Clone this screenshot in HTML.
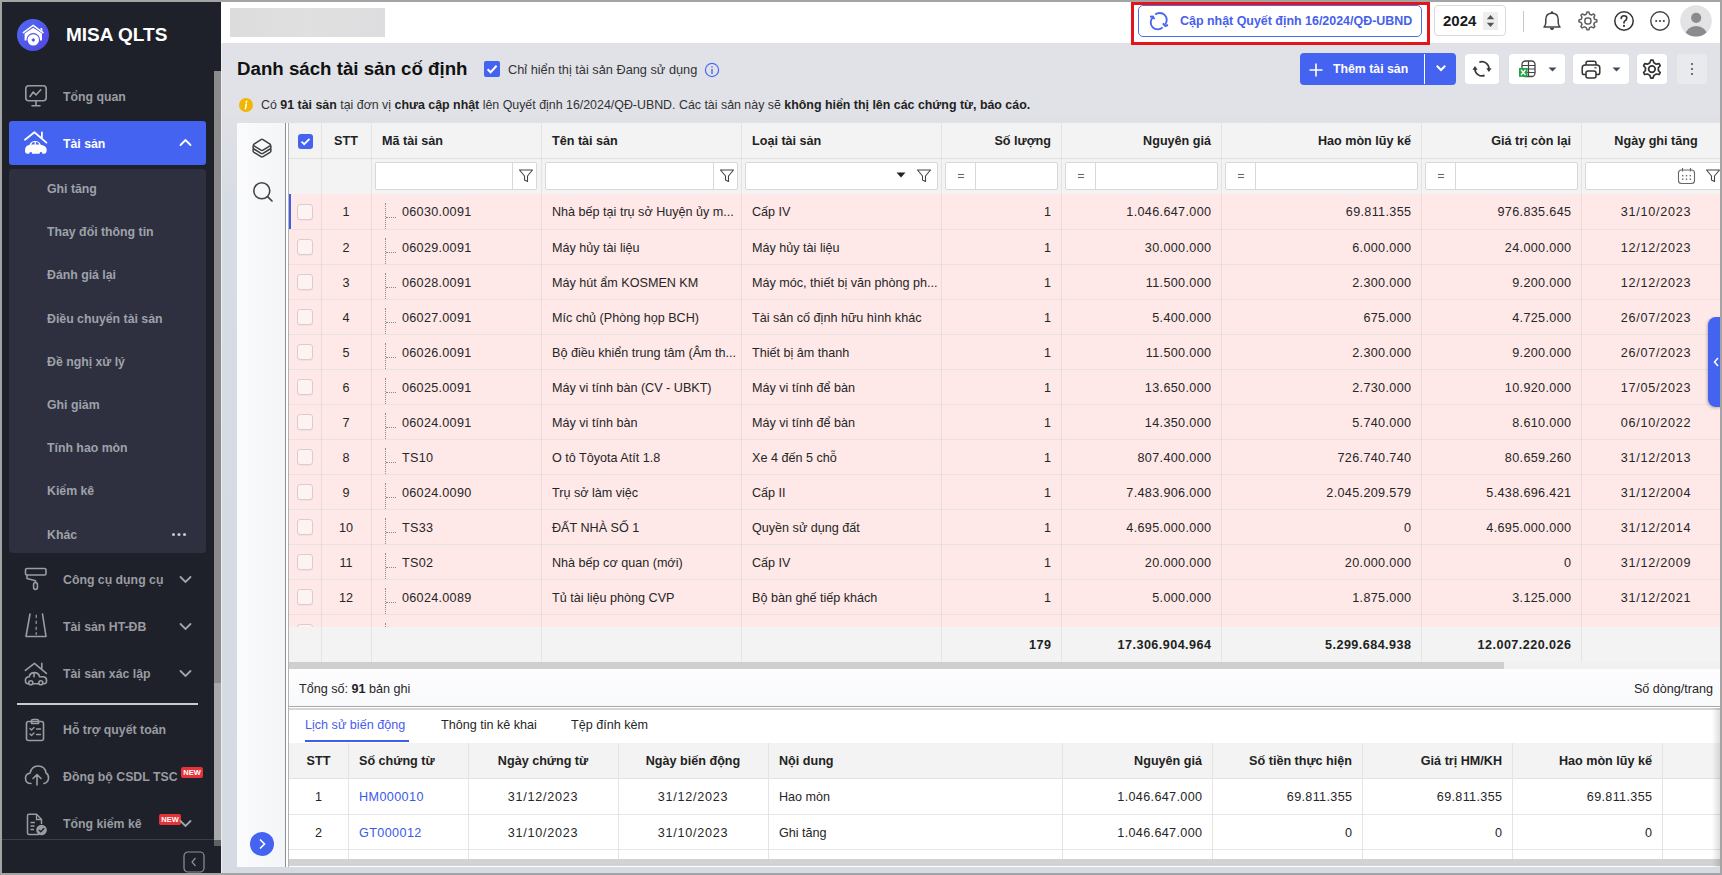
<!DOCTYPE html>
<html><head><meta charset="utf-8">
<style>
*{box-sizing:border-box;margin:0;padding:0}
html,body{width:1722px;height:875px;overflow:hidden;background:#a4a4a4;font-family:"Liberation Sans",sans-serif;color:#212121}
#frame{position:absolute;left:2px;top:2px;width:1718px;height:871px;overflow:hidden;background:#e0e2e7}
#pg{position:absolute;left:-2px;top:-2px;width:1722px;height:875px}
.a{position:absolute}
.nw{white-space:nowrap}
#side{position:absolute;left:0;top:0;width:221px;height:875px;background:#1e2129}
.mt{position:absolute;left:63px;color:#9a9ca2;font-weight:bold;font-size:12.3px;white-space:nowrap;line-height:16px}
.sub{position:absolute;left:47px;color:#9fa2a9;font-weight:bold;font-size:12.3px;white-space:nowrap;line-height:16px}
.ico{position:absolute;fill:none;stroke:#9b9da2;stroke-width:1.6;stroke-linecap:round;stroke-linejoin:round}
.new{position:absolute;background:#e5333a;color:#fff;font-size:7.5px;font-weight:bold;line-height:11px;height:11px;width:22px;text-align:center;border-radius:2px}
#top{position:absolute;left:221px;top:0;width:1501px;height:43px;background:#fff}
.rc{height:35px;line-height:37px;font-size:12.6px;color:#262626;white-space:nowrap}
.hc{height:35px;line-height:37px;font-size:12.6px;color:#222;font-weight:bold;white-space:nowrap}
</style></head>
<body>
<div id="frame"><div id="pg">
  <!-- SIDEBAR -->
  <div id="side">
    <!-- logo -->
    <svg class="a" style="left:17px;top:19px" width="32" height="32" viewBox="0 0 32 32">
      <defs><linearGradient id="lg" x1="0" y1="0" x2="1" y2="1"><stop offset="0" stop-color="#4d6cf0"/><stop offset="1" stop-color="#5544e4"/></linearGradient></defs>
      <circle cx="16" cy="16" r="16" fill="url(#lg)"/>
      <path d="M6.3 13.6 L16.2 6.3 L26 13.6" fill="none" stroke="#fff" stroke-width="1.5" stroke-linecap="round" stroke-linejoin="round"/>
      <path d="M23 9.8 L24.6 8.8 L25.4 10 L25.4 12.8 Z" fill="#fff"/>
      <path d="M7.6 14.6 L16.3 8.7 L25 14.6 V21.6 H7.6 Z" fill="#fff"/>
      <circle cx="16.3" cy="20.9" r="6.8" fill="#5057e8"/>
      <circle cx="16.3" cy="20.9" r="5.7" fill="#fff"/>
      <path d="M16.3 18.9 L18.3 20.9 L16.3 22.9 L14.3 20.9 Z" fill="#5057e8"/>
    </svg>
    <div class="a nw" style="left:66px;top:24px;color:#fff;font-weight:bold;font-size:19px;line-height:22px">MISA QLTS</div>

    <!-- Tong quan -->
    <svg class="ico" style="left:24px;top:84px" width="24" height="24" viewBox="0 0 24 24">
      <rect x="1.8" y="1.8" width="20.4" height="15" rx="3"/>
      <path d="M12 17 V21.5 M8 21.8 H16"/>
      <path d="M6 12.5 L9.3 8 L12 11 L16.8 5.8" />
    </svg>
    <div class="mt" style="top:89px">Tổng quan</div>

    <!-- active -->
    <div class="a" style="left:9px;top:121px;width:197px;height:44px;background:#4463f0;border-radius:3px"></div>
    <svg class="a" style="left:24px;top:131px" width="24" height="24" viewBox="0 0 24 24">
      <path d="M1 8.7 L10.4 1.3 L22.4 11.6 M17.9 1.3 V6.5" fill="none" stroke="#fff" stroke-width="1.8" stroke-linecap="round" stroke-linejoin="round"/>
      <path d="M5.6 13.8 Q6.6 9.9 11.2 9.9 Q15.6 9.9 16.8 13.8 Q22.7 14.6 22.7 19 Q22.7 22.7 20 22.7 H3.6 Q1 22.7 1 19.5 Q1 14.6 5.6 13.8 Z" fill="#fff"/>
      <path d="M7.2 13.4 Q8 11 10.6 11 V13.4 Z M11.9 11 Q14.4 11 15.3 13.4 H11.9 Z" fill="#4463f0"/>
      <circle cx="6.7" cy="22.2" r="1.3" fill="#4463f0"/><circle cx="17" cy="22.2" r="1.3" fill="#4463f0"/>
    </svg>
    <div class="a nw" style="left:63px;top:136px;color:#fff;font-weight:bold;font-size:12.3px;line-height:16px">Tài sản</div>
    <svg class="a" style="left:179px;top:138px" width="13" height="9" viewBox="0 0 13 9"><path d="M1.5 7 L6.5 2 L11.5 7" fill="none" stroke="#fff" stroke-width="1.8" stroke-linecap="round"/></svg>

    <!-- submenu -->
    <div class="a" style="left:9px;top:169px;width:197px;height:384px;background:#2e3040;border-radius:4px"></div>
    <div class="sub" style="top:181px">Ghi tăng</div>
    <div class="sub" style="top:224px">Thay đổi thông tin</div>
    <div class="sub" style="top:267px">Đánh giá lại</div>
    <div class="sub" style="top:311px">Điều chuyển tài sản</div>
    <div class="sub" style="top:354px">Đề nghị xử lý</div>
    <div class="sub" style="top:397px">Ghi giảm</div>
    <div class="sub" style="top:440px">Tính hao mòn</div>
    <div class="sub" style="top:483px">Kiểm kê</div>
    <div class="sub" style="top:527px">Khác</div>
    <div class="a" style="left:172px;top:533px;width:3px;height:3px;border-radius:50%;background:#c8cacd;box-shadow:5.5px 0 0 #c8cacd,11px 0 0 #c8cacd"></div>

    <!-- Cong cu dung cu -->
    <svg class="ico" style="left:24px;top:567px" width="24" height="24" viewBox="0 0 24 24">
      <rect x="1.5" y="1.5" width="20.5" height="6.5" rx="1.5"/>
      <path d="M3 8 V11.5 L11.5 13.8 V15.5"/>
      <rect x="9.6" y="15.5" width="3.8" height="7" rx="1.9"/>
    </svg>
    <div class="mt" style="top:572px">Công cụ dụng cụ</div>
    <svg class="a" style="left:179px;top:575px" width="13" height="9" viewBox="0 0 13 9"><path d="M1.5 2 L6.5 7 L11.5 2" fill="none" stroke="#a3a5ab" stroke-width="1.8" stroke-linecap="round"/></svg>

    <!-- HT-DB -->
    <svg class="ico" style="left:24px;top:612px" width="24" height="26" viewBox="0 0 24 26">
      <path d="M6 2 L2 24.5 H22 L18.5 2"/>
      <path d="M12.2 3 V5.5 M12.2 9 V11.5 M12.2 15 V17.5 M12.2 20.5 V22.5" stroke-width="1.2"/>
    </svg>
    <div class="mt" style="top:619px">Tài sản HT-ĐB</div>
    <svg class="a" style="left:179px;top:622px" width="13" height="9" viewBox="0 0 13 9"><path d="M1.5 2 L6.5 7 L11.5 2" fill="none" stroke="#a3a5ab" stroke-width="1.8" stroke-linecap="round"/></svg>

    <!-- xac lap -->
    <svg class="ico" style="left:24px;top:661px" width="24" height="25" viewBox="0 0 24 25">
      <path d="M1.4 9.4 L10.4 2.4 L22.4 12.4 M17.8 2.4 V7.4"/>
      <path d="M5.2 15.8 Q5.8 11.6 10.4 11.6 Q14.8 11.6 15.6 15.8 H19.5 Q22.6 16.2 22.6 19.5 Q22.6 22.8 20 22.8 H4 Q1.4 22.8 1.4 19.5 Q1.4 15.8 5.2 15.8 Z"/>
      <path d="M10 11.8 V15.8"/>
      <circle cx="6.8" cy="21.8" r="2" fill="#1e2129"/><circle cx="16.8" cy="21.8" r="2" fill="#1e2129"/>
    </svg>
    <div class="mt" style="top:666px">Tài sản xác lập</div>
    <svg class="a" style="left:179px;top:669px" width="13" height="9" viewBox="0 0 13 9"><path d="M1.5 2 L6.5 7 L11.5 2" fill="none" stroke="#a3a5ab" stroke-width="1.8" stroke-linecap="round"/></svg>

    <div class="a" style="left:17px;top:703px;width:181px;height:2px;background:#c9cbcf"></div>

    <!-- Ho tro quyet toan -->
    <svg class="ico" style="left:24px;top:718px" width="22" height="24" viewBox="0 0 22 24">
      <rect x="2.5" y="3.5" width="17" height="19" rx="2"/>
      <path d="M7.5 5.5 V2.8 Q7.5 1.5 9 1.5 H13 Q14.5 1.5 14.5 2.8 V5.5 Z"/>
      <path d="M6 10.5 L7.5 12 L10 9.5 M6 16 L7.5 17.5 L10 15 M12.5 11 H16.5 M12.5 16.5 H16.5" stroke-width="1.3"/>
    </svg>
    <div class="mt" style="top:722px">Hỗ trợ quyết toán</div>

    <!-- dong bo -->
    <svg class="ico" style="left:24px;top:764px" width="26" height="22" viewBox="0 0 26 22">
      <path d="M7 19.5 Q1.5 19.5 1.5 14.2 Q1.5 9.8 6 9.2 Q7.5 2 14 2 Q21 2 22 9 Q24.8 10.5 24.5 14.5 Q24 18.5 20 19.5"/>
      <path d="M13 21 V11 M9 14.5 L13 10.5 L17 14.5"/>
    </svg>
    <div class="mt" style="top:769px">Đồng bộ CSDL TSC</div>
    <div class="new" style="left:181px;top:767px">NEW</div>

    <!-- Tong kiem ke -->
    <svg class="a" style="left:26px;top:813px" width="22" height="23" viewBox="0 0 22 23">
      <path d="M13 21.5 H3 Q1.5 21.5 1.5 20 V2.8 Q1.5 1.3 3 1.3 H10.5 L15.5 6.5 V11" fill="none" stroke="#9b9da2" stroke-width="1.5" stroke-linejoin="round"/>
      <path d="M10.5 1.3 V6.5 H15.5" fill="none" stroke="#9b9da2" stroke-width="1.3"/>
      <path d="M4.5 13 H8.5 M4.5 16.5 H8 M4.5 9.5 H9" stroke="#9b9da2" stroke-width="1.3"/>
      <circle cx="15.5" cy="17" r="5.3" fill="#9b9da2"/>
      <path d="M12.9 17 L14.8 18.8 L18.2 15.3" fill="none" stroke="#1e2129" stroke-width="1.4"/>
    </svg>
    <div class="mt" style="top:816px">Tổng kiểm kê</div>
    <div class="new" style="left:159px;top:814px">NEW</div>
    <svg class="a" style="left:179px;top:819px" width="13" height="9" viewBox="0 0 13 9"><path d="M1.5 2 L6.5 7 L11.5 2" fill="none" stroke="#a3a5ab" stroke-width="1.8" stroke-linecap="round"/></svg>

    <div class="a" style="left:2px;top:839px;width:212px;height:1px;background:#3b3e46"></div>
    <svg class="a" style="left:183px;top:851px" width="22" height="22" viewBox="0 0 22 22">
      <rect x="1" y="1" width="20" height="20" rx="4" fill="none" stroke="#8f9196" stroke-width="1.2"/>
      <path d="M12.5 7 L9 11 L12.5 15" fill="none" stroke="#8f9196" stroke-width="1.2"/>
    </svg>
    <!-- scrollbar -->
    <div class="a" style="left:214px;top:71px;width:7px;height:770px;background:#a9a9a9"></div>
    <div class="a" style="left:214px;top:71px;width:7px;height:612px;background:#8b8b8b"></div>
    <div class="a" style="left:214px;top:840px;width:7px;height:6px;background:#5f6166"></div>
  </div>

  <div id="top">
  </div>
  <!-- blurred box -->
  <div class="a" style="left:230px;top:8px;width:155px;height:29px;background:linear-gradient(90deg,#dcdcdd,#e0e0e1 50%,#dddcde)"></div>
  <!-- red box -->
  <div class="a" style="left:1131px;top:2px;width:299px;height:43px;border:3px solid #e3151a"></div>
  <div class="a" style="left:1138px;top:5px;width:284px;height:32px;border:1.5px solid #4a6df0;border-radius:5px;background:#fff"></div>
  <svg class="a" style="left:1149px;top:11px" width="20" height="20" viewBox="0 0 20 20">
    <path d="M6.2 3.6 A7 7 0 0 1 16.2 13.3" fill="none" stroke="#4a66ee" stroke-width="1.9"/>
    <path d="M13.6 16.4 A7 7 0 0 1 3.8 6.4" fill="none" stroke="#4a66ee" stroke-width="1.9"/>
    <path d="M13.8 12.3 L16.3 15 L19 14" fill="none" stroke="#4a66ee" stroke-width="1.9" stroke-linejoin="round"/>
    <path d="M1 5.8 L4 5.4 L5.4 8.2" fill="none" stroke="#4a66ee" stroke-width="1.9" stroke-linejoin="round"/>
  </svg>
  <div class="a nw" style="left:1180px;top:13px;color:#4660ec;font-weight:bold;font-size:12.45px;line-height:16px">Cập nhật Quyết định 16/2024/QĐ-UBND</div>
  <!-- year -->
  <div class="a" style="left:1434px;top:5px;width:72px;height:31px;border:1px solid #d9d9d9;border-radius:4px;background:#fff"></div>
  <div class="a nw" style="left:1443px;top:12px;color:#1a1a1a;font-weight:bold;font-size:15px;line-height:17px">2024</div>
  <div class="a" style="left:1483px;top:12px;width:15px;height:18px;background:#eeeeee"></div>
  <svg class="a" style="left:1486px;top:14px" width="9" height="14" viewBox="0 0 9 14"><path d="M0.8 5.2 L4.5 1 L8.2 5.2 Z M0.8 8.8 L4.5 13 L8.2 8.8 Z" fill="#555"/></svg>
  <div class="a" style="left:1523px;top:11px;width:1px;height:21px;background:#c9c9c9"></div>
  <!-- bell -->
  <svg class="a" style="left:1541px;top:10px" width="22" height="22" viewBox="0 0 22 22">
    <path d="M3 17 Q4.8 15.2 4.8 12.5 V9.5 Q4.8 3.2 11 3.2 Q17.2 3.2 17.2 9.5 V12.5 Q17.2 15.2 19 17 Z" fill="none" stroke="#404040" stroke-width="1.5" stroke-linejoin="round"/>
    <path d="M10 2.9 Q11 1 12 2.9" fill="none" stroke="#404040" stroke-width="1.4"/>
    <path d="M9 18.4 Q11 20.8 13 18.4 Z" fill="#404040" stroke="#404040" stroke-width="1"/>
  </svg>
  <!-- gear -->
  <svg class="a" style="left:1576px;top:9px" width="24" height="24" viewBox="0 0 24 24">
    <path d="M10.18 5.22 L10.98 2.95 L12.82 2.95 L13.62 5.22 L15.41 5.96 L17.58 4.92 L18.88 6.22 L17.84 8.39 L18.58 10.18 L20.85 10.98 L20.85 12.82 L18.58 13.62 L17.84 15.41 L18.88 17.58 L17.58 18.88 L15.41 17.84 L13.62 18.58 L12.82 20.85 L10.98 20.85 L10.18 18.58 L8.39 17.84 L6.22 18.88 L4.92 17.58 L5.96 15.41 L5.22 13.62 L2.95 12.82 L2.95 10.98 L5.22 10.18 L5.96 8.39 L4.92 6.22 L6.22 4.92 L8.39 5.96 Z" fill="none" stroke="#5f5f5f" stroke-width="1.5" stroke-linejoin="round"/>
    <rect x="8.9" y="8.9" width="6" height="6" rx="2.4" fill="none" stroke="#5f5f5f" stroke-width="1.5"/>
  </svg>
  <!-- help -->
  <svg class="a" style="left:1613px;top:10px" width="22" height="22" viewBox="0 0 22 22">
    <circle cx="11" cy="11" r="9.2" fill="none" stroke="#333" stroke-width="1.5"/>
    <path d="M8.2 8.6 Q8.2 5.8 11 5.8 Q13.8 5.8 13.8 8.3 Q13.8 10 11.8 10.9 Q11 11.3 11 12.6 V13" fill="none" stroke="#333" stroke-width="1.6" stroke-linecap="round"/>
    <circle cx="11" cy="15.9" r="1.1" fill="#333"/>
  </svg>
  <!-- more -->
  <svg class="a" style="left:1649px;top:10px" width="22" height="22" viewBox="0 0 22 22">
    <circle cx="11" cy="11" r="9.2" fill="none" stroke="#444" stroke-width="1.4"/>
    <circle cx="7.2" cy="11" r="1.1" fill="#444"/><circle cx="11" cy="11" r="1.1" fill="#444"/><circle cx="14.8" cy="11" r="1.1" fill="#444"/>
  </svg>
  <!-- avatar -->
  <svg class="a" style="left:1680px;top:5px" width="32" height="32" viewBox="0 0 32 32">
    <defs><clipPath id="avc"><circle cx="16" cy="16" r="15.6"/></clipPath></defs>
    <circle cx="16" cy="16" r="15.8" fill="#e3e3e5"/>
    <g clip-path="url(#avc)" fill="#8a8a8f"><circle cx="16.2" cy="12.8" r="5.1"/><ellipse cx="16.2" cy="30" rx="10.8" ry="9"/></g>
  </svg>

  <!-- TITLE ROW -->
  <div class="a nw" style="left:237px;top:58px;color:#111;font-weight:bold;font-size:18.7px;line-height:22px">Danh sách tài sản cố định</div>
  <div class="a" style="left:484px;top:61px;width:16px;height:16px;background:#4463f0;border-radius:2px"></div>
  <svg class="a" style="left:484px;top:61px" width="16" height="16" viewBox="0 0 16 16"><path d="M3.6 8.2 L6.6 11.2 L12.6 4.8" fill="none" stroke="#fff" stroke-width="2"/></svg>
  <div class="a nw" style="left:508px;top:62px;color:#333;font-size:12.75px;line-height:16px">Chỉ hiển thị tài sản Đang sử dụng</div>
  <svg class="a" style="left:704px;top:62px" width="16" height="16" viewBox="0 0 16 16">
    <circle cx="8" cy="8" r="6.6" fill="none" stroke="#4a6cf0" stroke-width="1.2"/>
    <rect x="7.3" y="7" width="1.4" height="5" fill="#4a6cf0"/><circle cx="8" cy="5" r="0.85" fill="#4a6cf0"/>
  </svg>

  <!-- TOOLBAR -->
  <div class="a" style="left:1300px;top:53px;width:156px;height:32px;background:#4463f0;border-radius:4px"></div>
  <svg class="a" style="left:1308px;top:62px" width="16" height="16" viewBox="0 0 16 16"><path d="M8 1.5 V14.5 M1.5 8 H14.5" stroke="#fff" stroke-width="1.6"/></svg>
  <div class="a nw" style="left:1333px;top:61px;color:#fff;font-weight:bold;font-size:12.3px;line-height:16px">Thêm tài sản</div>
  <div class="a" style="left:1424px;top:54px;width:1px;height:30px;background:#fff"></div>
  <svg class="a" style="left:1435px;top:64px" width="12" height="8" viewBox="0 0 12 8"><path d="M1.8 1.8 L6 6 L10.2 1.8" fill="none" stroke="#fff" stroke-width="2"/></svg>

  <div class="a" style="left:1465px;top:54px;width:34px;height:30px;background:#fff;border-radius:4px"></div>
  <svg class="a" style="left:1472px;top:60px" width="21" height="18" viewBox="0 0 21 18">
    <path d="M7.3 2.3 A7 7 0 0 1 16.9 9.5" fill="none" stroke="#383838" stroke-width="1.7"/>
    <path d="M12.6 15.4 A7 7 0 0 1 3 8.5" fill="none" stroke="#383838" stroke-width="1.7"/>
    <path d="M14.3 8.2 L19.6 8.2 L16.9 12 Z" fill="#383838"/>
    <path d="M0.4 9.8 L5.7 9.8 L3 6 Z" fill="#383838"/>
  </svg>

  <div class="a" style="left:1509px;top:54px;width:56px;height:30px;background:#fff;border-radius:4px"></div>
  <svg class="a" style="left:1518px;top:60px" width="20" height="18" viewBox="0 0 20 18">
    <rect x="4" y="1" width="13" height="15.5" rx="3.5" fill="none" stroke="#444" stroke-width="1.3"/>
    <path d="M4 5.5 H17 M4 9 H17 M4 12.5 H17 M10.5 1 V16.5" stroke="#444" stroke-width="1.2"/>
    <rect x="1" y="8" width="8.5" height="8.8" fill="#21a443"/>
    <path d="M3 9.8 L7.5 15 M7.5 9.8 L3 15" stroke="#fff" stroke-width="1.3"/>
  </svg>
  <svg class="a" style="left:1548px;top:67px" width="9" height="5" viewBox="0 0 9 5"><path d="M0.5 0.5 H8.5 L4.5 4.5 Z" fill="#3d4a66"/></svg>

  <div class="a" style="left:1573px;top:54px;width:56px;height:30px;background:#fff;border-radius:4px"></div>
  <svg class="a" style="left:1581px;top:60px" width="20" height="19" viewBox="0 0 20 19">
    <path d="M5 5 V3.3 Q5 1.3 7 1.3 H13 Q15 1.3 15 3.3 V5" fill="none" stroke="#333" stroke-width="1.5"/>
    <path d="M5 14.5 H3.3 Q1.2 14.5 1.2 12.4 V8 Q1.2 5 4.2 5 H15.8 Q18.8 5 18.8 8 V12.4 Q18.8 14.5 16.7 14.5 H15" fill="none" stroke="#333" stroke-width="1.5"/>
    <rect x="5" y="11" width="10" height="7" rx="2" fill="none" stroke="#333" stroke-width="1.5"/>
    <path d="M13.5 7.8 H15.5" stroke="#333" stroke-width="1.2"/>
  </svg>
  <svg class="a" style="left:1612px;top:67px" width="9" height="5" viewBox="0 0 9 5"><path d="M0.5 0.5 H8.5 L4.5 4.5 Z" fill="#3d4a66"/></svg>

  <div class="a" style="left:1637px;top:54px;width:30px;height:30px;background:#fff;border-radius:4px"></div>
  <svg class="a" style="left:1640px;top:57px" width="24" height="24" viewBox="0 0 24 24">
    <path d="M9.86 5.82 L10.77 3.17 L13.03 3.17 L13.94 5.82 L16.32 7.20 L19.07 6.66 L20.20 8.61 L18.36 10.73 L18.36 13.47 L20.20 15.59 L19.07 17.54 L16.32 17.00 L13.94 18.38 L13.03 21.03 L10.77 21.03 L9.86 18.38 L7.48 17.00 L4.73 17.54 L3.60 15.59 L5.44 13.47 L5.44 10.73 L3.60 8.61 L4.73 6.66 L7.48 7.20 Z" fill="none" stroke="#333" stroke-width="1.7" stroke-linejoin="round"/>
    <circle cx="11.9" cy="12.1" r="3.3" fill="none" stroke="#333" stroke-width="1.7"/>
  </svg>

  <div class="a" style="left:1677px;top:54px;width:30px;height:30px;background:#e9eaed;border-radius:4px"></div>
  <div class="a" style="left:1691px;top:63px;width:2.4px;height:2.4px;background:#3d4a66;border-radius:1px;box-shadow:0 5px 0 #3d4a66,0 10px 0 #3d4a66"></div>

  <!-- NOTICE -->
  <svg class="a" style="left:239px;top:98px" width="14" height="14" viewBox="0 0 14 14">
    <circle cx="7" cy="7" r="7" fill="#f1b603"/>
    <path d="M7.6 3.2 L7.2 4.6" stroke="#fff" stroke-width="1.5" stroke-linecap="round"/>
    <path d="M7.3 6.2 L6.4 10.6" stroke="#fff" stroke-width="1.6" stroke-linecap="round"/>
  </svg>
  <div class="a nw" style="left:261px;top:97px;color:#333;font-size:12.4px;line-height:16px">Có <b style="color:#222">91 tài sản</b> tại đơn vị <b style="color:#222">chưa cập nhật</b> lên Quyết định 16/2024/QĐ-UBND. Các tài sản này sẽ <b style="color:#222">không hiển thị lên các chứng từ, báo cáo.</b></div>

  <!-- CONTENT PANEL -->
  <div class="a" style="left:221px;top:116px;width:1499px;height:759px;background:linear-gradient(#dfe1e6,#d7dbe3 84px,#d6dae3)"></div>
  <div class="a" style="left:221px;top:43px;width:1px;height:832px;background:#eceef2"></div>
  <div class="a" style="left:237px;top:123px;width:1483px;height:744px;background:#fff"></div>
  <div class="a" style="left:237px;top:123px;width:49px;height:744px;background:linear-gradient(90deg,#fbfbfc,#f3f5f8)"></div>
  <div class="a" style="left:285px;top:123px;width:1px;height:744px;background:#8e8e8e"></div>
  <div class="a" style="left:288px;top:123px;width:1px;height:744px;background:#b4b4b4"></div>
  <svg class="a" style="left:251px;top:137px" width="22" height="22" viewBox="0 0 22 22">
    <path d="M3 7.2 L10 2.6 Q11 2 12 2.6 L19 7.2 Q20 8 19 8.8 L12 13.2 Q11 13.8 10 13.2 L3 8.8 Q2 8 3 7.2 Z" fill="none" stroke="#3f3f3f" stroke-width="1.5"/>
    <path d="M2.1 8.4 V10.6 Q2.1 11.4 3 12 L10 16.4 Q11 17 12 16.4 L19 12 Q19.9 11.4 19.9 10.6 V8.4" fill="none" stroke="#3f3f3f" stroke-width="1.5"/>
    <path d="M2.1 11.6 V13.9 Q2.1 14.7 3 15.3 L10 19.7 Q11 20.3 12 19.7 L19 15.3 Q19.9 14.7 19.9 13.9 V11.6" fill="none" stroke="#3f3f3f" stroke-width="1.5"/>
  </svg>
  <svg class="a" style="left:252px;top:181px" width="22" height="22" viewBox="0 0 22 22">
    <circle cx="9.8" cy="9.8" r="8" fill="none" stroke="#444" stroke-width="1.6"/>
    <path d="M15.6 15.6 L20 20" stroke="#444" stroke-width="1.7" stroke-linecap="round"/>
  </svg>
  <svg class="a" style="left:250px;top:832px" width="24" height="24" viewBox="0 0 24 24">
    <circle cx="12" cy="12" r="12" fill="#4463f0"/>
    <path d="M10 7.5 L14.5 12 L10 16.5" fill="none" stroke="#fff" stroke-width="1.6"/>
  </svg>
<div class="a" style="left:289px;top:123px;width:1431px;height:546px;overflow:hidden;background:#fff">
<div class="a" style="left:0;top:0;width:1442px;height:71px;background:#f3f3f3"></div>
<div class="a" style="left:0;top:35px;width:1442px;height:1px;background:#e1e1e1"></div>
<div class="a" style="left:0;top:71px;width:1442px;height:35px;background:#fee8e8"></div>
<div class="a" style="left:8px;top:81px;width:16px;height:16px;border:1px solid #dccdcd;border-radius:3px;background:#fdf3f3;box-shadow:0 1px 1px rgba(0,0,0,0.04)"></div>
<div class="a rc" style="left:32px;top:71px;width:50px;text-align:center">1</div>
<div class="a" style="left:96px;top:80px;width:0;height:26px;border-left:1px dotted #8a8a8a"></div>
<div class="a" style="left:97px;top:94px;width:10px;height:0;border-top:1px dotted #8a8a8a"></div>
<div class="a rc" style="left:113px;top:71px;letter-spacing:0.3px">06030.0091</div>
<div class="a rc" style="left:263px;top:71px">Nhà bếp tại trụ sở Huyện ủy m...</div>
<div class="a rc" style="left:463px;top:71px">Cấp IV</div>
<div class="a rc" style="left:562.4px;top:71px;width:200px;text-align:right;letter-spacing:0.35px">1</div>
<div class="a rc" style="left:722.4px;top:71px;width:200px;text-align:right;letter-spacing:0.35px">1.046.647.000</div>
<div class="a rc" style="left:922.4px;top:71px;width:200px;text-align:right;letter-spacing:0.35px">69.811.355</div>
<div class="a rc" style="left:1082.4px;top:71px;width:200px;text-align:right;letter-spacing:0.35px">976.835.645</div>
<div class="a rc" style="left:1292px;top:71px;width:150px;text-align:center;letter-spacing:0.75px">31/10/2023</div>
<div class="a" style="left:0;top:106px;width:1442px;height:35px;background:#fee8e8"></div>
<div class="a" style="left:8px;top:116px;width:16px;height:16px;border:1px solid #dccdcd;border-radius:3px;background:#fdf3f3;box-shadow:0 1px 1px rgba(0,0,0,0.04)"></div>
<div class="a rc" style="left:32px;top:107px;width:50px;text-align:center">2</div>
<div class="a" style="left:96px;top:115px;width:0;height:26px;border-left:1px dotted #8a8a8a"></div>
<div class="a" style="left:97px;top:129px;width:10px;height:0;border-top:1px dotted #8a8a8a"></div>
<div class="a rc" style="left:113px;top:107px;letter-spacing:0.3px">06029.0091</div>
<div class="a rc" style="left:263px;top:107px">Máy hủy tài liệu</div>
<div class="a rc" style="left:463px;top:107px">Máy hủy tài liệu</div>
<div class="a rc" style="left:562.4px;top:107px;width:200px;text-align:right;letter-spacing:0.35px">1</div>
<div class="a rc" style="left:722.4px;top:107px;width:200px;text-align:right;letter-spacing:0.35px">30.000.000</div>
<div class="a rc" style="left:922.4px;top:107px;width:200px;text-align:right;letter-spacing:0.35px">6.000.000</div>
<div class="a rc" style="left:1082.4px;top:107px;width:200px;text-align:right;letter-spacing:0.35px">24.000.000</div>
<div class="a rc" style="left:1292px;top:107px;width:150px;text-align:center;letter-spacing:0.75px">12/12/2023</div>
<div class="a" style="left:0;top:141px;width:1442px;height:35px;background:#fee8e8"></div>
<div class="a" style="left:8px;top:151px;width:16px;height:16px;border:1px solid #dccdcd;border-radius:3px;background:#fdf3f3;box-shadow:0 1px 1px rgba(0,0,0,0.04)"></div>
<div class="a rc" style="left:32px;top:142px;width:50px;text-align:center">3</div>
<div class="a" style="left:96px;top:150px;width:0;height:26px;border-left:1px dotted #8a8a8a"></div>
<div class="a" style="left:97px;top:164px;width:10px;height:0;border-top:1px dotted #8a8a8a"></div>
<div class="a rc" style="left:113px;top:142px;letter-spacing:0.3px">06028.0091</div>
<div class="a rc" style="left:263px;top:142px">Máy hút ẩm KOSMEN KM</div>
<div class="a rc" style="left:463px;top:142px">Máy móc, thiết bị văn phòng ph...</div>
<div class="a rc" style="left:562.4px;top:142px;width:200px;text-align:right;letter-spacing:0.35px">1</div>
<div class="a rc" style="left:722.4px;top:142px;width:200px;text-align:right;letter-spacing:0.35px">11.500.000</div>
<div class="a rc" style="left:922.4px;top:142px;width:200px;text-align:right;letter-spacing:0.35px">2.300.000</div>
<div class="a rc" style="left:1082.4px;top:142px;width:200px;text-align:right;letter-spacing:0.35px">9.200.000</div>
<div class="a rc" style="left:1292px;top:142px;width:150px;text-align:center;letter-spacing:0.75px">12/12/2023</div>
<div class="a" style="left:0;top:176px;width:1442px;height:35px;background:#fee8e8"></div>
<div class="a" style="left:8px;top:186px;width:16px;height:16px;border:1px solid #dccdcd;border-radius:3px;background:#fdf3f3;box-shadow:0 1px 1px rgba(0,0,0,0.04)"></div>
<div class="a rc" style="left:32px;top:177px;width:50px;text-align:center">4</div>
<div class="a" style="left:96px;top:185px;width:0;height:26px;border-left:1px dotted #8a8a8a"></div>
<div class="a" style="left:97px;top:199px;width:10px;height:0;border-top:1px dotted #8a8a8a"></div>
<div class="a rc" style="left:113px;top:177px;letter-spacing:0.3px">06027.0091</div>
<div class="a rc" style="left:263px;top:177px">Míc chủ (Phòng họp BCH)</div>
<div class="a rc" style="left:463px;top:177px">Tài sản cố định hữu hình khác</div>
<div class="a rc" style="left:562.4px;top:177px;width:200px;text-align:right;letter-spacing:0.35px">1</div>
<div class="a rc" style="left:722.4px;top:177px;width:200px;text-align:right;letter-spacing:0.35px">5.400.000</div>
<div class="a rc" style="left:922.4px;top:177px;width:200px;text-align:right;letter-spacing:0.35px">675.000</div>
<div class="a rc" style="left:1082.4px;top:177px;width:200px;text-align:right;letter-spacing:0.35px">4.725.000</div>
<div class="a rc" style="left:1292px;top:177px;width:150px;text-align:center;letter-spacing:0.75px">26/07/2023</div>
<div class="a" style="left:0;top:211px;width:1442px;height:35px;background:#fee8e8"></div>
<div class="a" style="left:8px;top:221px;width:16px;height:16px;border:1px solid #dccdcd;border-radius:3px;background:#fdf3f3;box-shadow:0 1px 1px rgba(0,0,0,0.04)"></div>
<div class="a rc" style="left:32px;top:212px;width:50px;text-align:center">5</div>
<div class="a" style="left:96px;top:220px;width:0;height:26px;border-left:1px dotted #8a8a8a"></div>
<div class="a" style="left:97px;top:234px;width:10px;height:0;border-top:1px dotted #8a8a8a"></div>
<div class="a rc" style="left:113px;top:212px;letter-spacing:0.3px">06026.0091</div>
<div class="a rc" style="left:263px;top:212px">Bộ điều khiển trung tâm (Âm th...</div>
<div class="a rc" style="left:463px;top:212px">Thiết bị âm thanh</div>
<div class="a rc" style="left:562.4px;top:212px;width:200px;text-align:right;letter-spacing:0.35px">1</div>
<div class="a rc" style="left:722.4px;top:212px;width:200px;text-align:right;letter-spacing:0.35px">11.500.000</div>
<div class="a rc" style="left:922.4px;top:212px;width:200px;text-align:right;letter-spacing:0.35px">2.300.000</div>
<div class="a rc" style="left:1082.4px;top:212px;width:200px;text-align:right;letter-spacing:0.35px">9.200.000</div>
<div class="a rc" style="left:1292px;top:212px;width:150px;text-align:center;letter-spacing:0.75px">26/07/2023</div>
<div class="a" style="left:0;top:246px;width:1442px;height:35px;background:#fee8e8"></div>
<div class="a" style="left:8px;top:256px;width:16px;height:16px;border:1px solid #dccdcd;border-radius:3px;background:#fdf3f3;box-shadow:0 1px 1px rgba(0,0,0,0.04)"></div>
<div class="a rc" style="left:32px;top:247px;width:50px;text-align:center">6</div>
<div class="a" style="left:96px;top:255px;width:0;height:26px;border-left:1px dotted #8a8a8a"></div>
<div class="a" style="left:97px;top:269px;width:10px;height:0;border-top:1px dotted #8a8a8a"></div>
<div class="a rc" style="left:113px;top:247px;letter-spacing:0.3px">06025.0091</div>
<div class="a rc" style="left:263px;top:247px">Máy vi tính bàn (CV - UBKT)</div>
<div class="a rc" style="left:463px;top:247px">Máy vi tính để bàn</div>
<div class="a rc" style="left:562.4px;top:247px;width:200px;text-align:right;letter-spacing:0.35px">1</div>
<div class="a rc" style="left:722.4px;top:247px;width:200px;text-align:right;letter-spacing:0.35px">13.650.000</div>
<div class="a rc" style="left:922.4px;top:247px;width:200px;text-align:right;letter-spacing:0.35px">2.730.000</div>
<div class="a rc" style="left:1082.4px;top:247px;width:200px;text-align:right;letter-spacing:0.35px">10.920.000</div>
<div class="a rc" style="left:1292px;top:247px;width:150px;text-align:center;letter-spacing:0.75px">17/05/2023</div>
<div class="a" style="left:0;top:281px;width:1442px;height:35px;background:#fee8e8"></div>
<div class="a" style="left:8px;top:291px;width:16px;height:16px;border:1px solid #dccdcd;border-radius:3px;background:#fdf3f3;box-shadow:0 1px 1px rgba(0,0,0,0.04)"></div>
<div class="a rc" style="left:32px;top:282px;width:50px;text-align:center">7</div>
<div class="a" style="left:96px;top:290px;width:0;height:26px;border-left:1px dotted #8a8a8a"></div>
<div class="a" style="left:97px;top:304px;width:10px;height:0;border-top:1px dotted #8a8a8a"></div>
<div class="a rc" style="left:113px;top:282px;letter-spacing:0.3px">06024.0091</div>
<div class="a rc" style="left:263px;top:282px">Máy vi tính bàn</div>
<div class="a rc" style="left:463px;top:282px">Máy vi tính để bàn</div>
<div class="a rc" style="left:562.4px;top:282px;width:200px;text-align:right;letter-spacing:0.35px">1</div>
<div class="a rc" style="left:722.4px;top:282px;width:200px;text-align:right;letter-spacing:0.35px">14.350.000</div>
<div class="a rc" style="left:922.4px;top:282px;width:200px;text-align:right;letter-spacing:0.35px">5.740.000</div>
<div class="a rc" style="left:1082.4px;top:282px;width:200px;text-align:right;letter-spacing:0.35px">8.610.000</div>
<div class="a rc" style="left:1292px;top:282px;width:150px;text-align:center;letter-spacing:0.75px">06/10/2022</div>
<div class="a" style="left:0;top:316px;width:1442px;height:35px;background:#fee8e8"></div>
<div class="a" style="left:8px;top:326px;width:16px;height:16px;border:1px solid #dccdcd;border-radius:3px;background:#fdf3f3;box-shadow:0 1px 1px rgba(0,0,0,0.04)"></div>
<div class="a rc" style="left:32px;top:317px;width:50px;text-align:center">8</div>
<div class="a" style="left:96px;top:325px;width:0;height:26px;border-left:1px dotted #8a8a8a"></div>
<div class="a" style="left:97px;top:339px;width:10px;height:0;border-top:1px dotted #8a8a8a"></div>
<div class="a rc" style="left:113px;top:317px;letter-spacing:0.3px">TS10</div>
<div class="a rc" style="left:263px;top:317px">O tô Tôyota Atít 1.8</div>
<div class="a rc" style="left:463px;top:317px">Xe 4 đến 5 chỗ</div>
<div class="a rc" style="left:562.4px;top:317px;width:200px;text-align:right;letter-spacing:0.35px">1</div>
<div class="a rc" style="left:722.4px;top:317px;width:200px;text-align:right;letter-spacing:0.35px">807.400.000</div>
<div class="a rc" style="left:922.4px;top:317px;width:200px;text-align:right;letter-spacing:0.35px">726.740.740</div>
<div class="a rc" style="left:1082.4px;top:317px;width:200px;text-align:right;letter-spacing:0.35px">80.659.260</div>
<div class="a rc" style="left:1292px;top:317px;width:150px;text-align:center;letter-spacing:0.75px">31/12/2013</div>
<div class="a" style="left:0;top:351px;width:1442px;height:35px;background:#fee8e8"></div>
<div class="a" style="left:8px;top:361px;width:16px;height:16px;border:1px solid #dccdcd;border-radius:3px;background:#fdf3f3;box-shadow:0 1px 1px rgba(0,0,0,0.04)"></div>
<div class="a rc" style="left:32px;top:352px;width:50px;text-align:center">9</div>
<div class="a" style="left:96px;top:360px;width:0;height:26px;border-left:1px dotted #8a8a8a"></div>
<div class="a" style="left:97px;top:374px;width:10px;height:0;border-top:1px dotted #8a8a8a"></div>
<div class="a rc" style="left:113px;top:352px;letter-spacing:0.3px">06024.0090</div>
<div class="a rc" style="left:263px;top:352px">Trụ sở làm việc</div>
<div class="a rc" style="left:463px;top:352px">Cấp II</div>
<div class="a rc" style="left:562.4px;top:352px;width:200px;text-align:right;letter-spacing:0.35px">1</div>
<div class="a rc" style="left:722.4px;top:352px;width:200px;text-align:right;letter-spacing:0.35px">7.483.906.000</div>
<div class="a rc" style="left:922.4px;top:352px;width:200px;text-align:right;letter-spacing:0.35px">2.045.209.579</div>
<div class="a rc" style="left:1082.4px;top:352px;width:200px;text-align:right;letter-spacing:0.35px">5.438.696.421</div>
<div class="a rc" style="left:1292px;top:352px;width:150px;text-align:center;letter-spacing:0.75px">31/12/2004</div>
<div class="a" style="left:0;top:386px;width:1442px;height:35px;background:#fee8e8"></div>
<div class="a" style="left:8px;top:396px;width:16px;height:16px;border:1px solid #dccdcd;border-radius:3px;background:#fdf3f3;box-shadow:0 1px 1px rgba(0,0,0,0.04)"></div>
<div class="a rc" style="left:32px;top:387px;width:50px;text-align:center">10</div>
<div class="a" style="left:96px;top:395px;width:0;height:26px;border-left:1px dotted #8a8a8a"></div>
<div class="a" style="left:97px;top:409px;width:10px;height:0;border-top:1px dotted #8a8a8a"></div>
<div class="a rc" style="left:113px;top:387px;letter-spacing:0.3px">TS33</div>
<div class="a rc" style="left:263px;top:387px">ĐẤT NHÀ SỐ 1</div>
<div class="a rc" style="left:463px;top:387px">Quyền sử dụng đất</div>
<div class="a rc" style="left:562.4px;top:387px;width:200px;text-align:right;letter-spacing:0.35px">1</div>
<div class="a rc" style="left:722.4px;top:387px;width:200px;text-align:right;letter-spacing:0.35px">4.695.000.000</div>
<div class="a rc" style="left:922.4px;top:387px;width:200px;text-align:right;letter-spacing:0.35px">0</div>
<div class="a rc" style="left:1082.4px;top:387px;width:200px;text-align:right;letter-spacing:0.35px">4.695.000.000</div>
<div class="a rc" style="left:1292px;top:387px;width:150px;text-align:center;letter-spacing:0.75px">31/12/2014</div>
<div class="a" style="left:0;top:421px;width:1442px;height:35px;background:#fee8e8"></div>
<div class="a" style="left:8px;top:431px;width:16px;height:16px;border:1px solid #dccdcd;border-radius:3px;background:#fdf3f3;box-shadow:0 1px 1px rgba(0,0,0,0.04)"></div>
<div class="a rc" style="left:32px;top:422px;width:50px;text-align:center">11</div>
<div class="a" style="left:96px;top:430px;width:0;height:26px;border-left:1px dotted #8a8a8a"></div>
<div class="a" style="left:97px;top:444px;width:10px;height:0;border-top:1px dotted #8a8a8a"></div>
<div class="a rc" style="left:113px;top:422px;letter-spacing:0.3px">TS02</div>
<div class="a rc" style="left:263px;top:422px">Nhà bếp cơ quan (mới)</div>
<div class="a rc" style="left:463px;top:422px">Cấp IV</div>
<div class="a rc" style="left:562.4px;top:422px;width:200px;text-align:right;letter-spacing:0.35px">1</div>
<div class="a rc" style="left:722.4px;top:422px;width:200px;text-align:right;letter-spacing:0.35px">20.000.000</div>
<div class="a rc" style="left:922.4px;top:422px;width:200px;text-align:right;letter-spacing:0.35px">20.000.000</div>
<div class="a rc" style="left:1082.4px;top:422px;width:200px;text-align:right;letter-spacing:0.35px">0</div>
<div class="a rc" style="left:1292px;top:422px;width:150px;text-align:center;letter-spacing:0.75px">31/12/2009</div>
<div class="a" style="left:0;top:456px;width:1442px;height:35px;background:#fee8e8"></div>
<div class="a" style="left:8px;top:466px;width:16px;height:16px;border:1px solid #dccdcd;border-radius:3px;background:#fdf3f3;box-shadow:0 1px 1px rgba(0,0,0,0.04)"></div>
<div class="a rc" style="left:32px;top:457px;width:50px;text-align:center">12</div>
<div class="a" style="left:96px;top:465px;width:0;height:26px;border-left:1px dotted #8a8a8a"></div>
<div class="a" style="left:97px;top:479px;width:10px;height:0;border-top:1px dotted #8a8a8a"></div>
<div class="a rc" style="left:113px;top:457px;letter-spacing:0.3px">06024.0089</div>
<div class="a rc" style="left:263px;top:457px">Tủ tài liệu phòng CVP</div>
<div class="a rc" style="left:463px;top:457px">Bộ bàn ghế tiếp khách</div>
<div class="a rc" style="left:562.4px;top:457px;width:200px;text-align:right;letter-spacing:0.35px">1</div>
<div class="a rc" style="left:722.4px;top:457px;width:200px;text-align:right;letter-spacing:0.35px">5.000.000</div>
<div class="a rc" style="left:922.4px;top:457px;width:200px;text-align:right;letter-spacing:0.35px">1.875.000</div>
<div class="a rc" style="left:1082.4px;top:457px;width:200px;text-align:right;letter-spacing:0.35px">3.125.000</div>
<div class="a rc" style="left:1292px;top:457px;width:150px;text-align:center;letter-spacing:0.75px">31/12/2021</div>
<div class="a" style="left:0;top:491px;width:1442px;height:35px;background:#fee8e8"></div>
<div class="a" style="left:8px;top:501px;width:16px;height:16px;border:1px solid #dccdcd;border-radius:3px;background:#fdf3f3;box-shadow:0 1px 1px rgba(0,0,0,0.04)"></div>
<div class="a rc" style="left:32px;top:492px;width:50px;text-align:center">13</div>
<div class="a" style="left:96px;top:500px;width:0;height:26px;border-left:1px dotted #8a8a8a"></div>
<div class="a" style="left:97px;top:514px;width:10px;height:0;border-top:1px dotted #8a8a8a"></div>
<div class="a rc" style="left:113px;top:492px;letter-spacing:0.3px">06024.0088</div>
<div class="a rc" style="left:263px;top:492px">Bộ bàn ghế tiếp khách</div>
<div class="a rc" style="left:463px;top:492px">Bộ bàn ghế tiếp khách</div>
<div class="a rc" style="left:562.4px;top:492px;width:200px;text-align:right;letter-spacing:0.35px">1</div>
<div class="a rc" style="left:722.4px;top:492px;width:200px;text-align:right;letter-spacing:0.35px">5.000.000</div>
<div class="a rc" style="left:922.4px;top:492px;width:200px;text-align:right;letter-spacing:0.35px">1.875.000</div>
<div class="a rc" style="left:1082.4px;top:492px;width:200px;text-align:right;letter-spacing:0.35px">3.125.000</div>
<div class="a rc" style="left:1292px;top:492px;width:150px;text-align:center;letter-spacing:0.75px">31/12/2021</div>
<div class="a" style="left:0;top:106px;width:1442px;height:1px;background:#e8e2e0"></div>
<div class="a" style="left:0;top:141px;width:1442px;height:1px;background:#e8e2e0"></div>
<div class="a" style="left:0;top:176px;width:1442px;height:1px;background:#e8e2e0"></div>
<div class="a" style="left:0;top:211px;width:1442px;height:1px;background:#e8e2e0"></div>
<div class="a" style="left:0;top:246px;width:1442px;height:1px;background:#e8e2e0"></div>
<div class="a" style="left:0;top:281px;width:1442px;height:1px;background:#e8e2e0"></div>
<div class="a" style="left:0;top:316px;width:1442px;height:1px;background:#e8e2e0"></div>
<div class="a" style="left:0;top:351px;width:1442px;height:1px;background:#e8e2e0"></div>
<div class="a" style="left:0;top:386px;width:1442px;height:1px;background:#e8e2e0"></div>
<div class="a" style="left:0;top:421px;width:1442px;height:1px;background:#e8e2e0"></div>
<div class="a" style="left:0;top:456px;width:1442px;height:1px;background:#e8e2e0"></div>
<div class="a" style="left:0;top:491px;width:1442px;height:1px;background:#e8e2e0"></div>
<div class="a" style="left:0;top:526px;width:1442px;height:1px;background:#e8e2e0"></div>
<div class="a" style="left:0;top:504px;width:1442px;height:35px;background:#f3f3f3"></div>
<div class="a rc" style="left:562.45px;top:504px;width:200px;text-align:right;font-weight:bold;color:#222;letter-spacing:0.45px">179</div>
<div class="a rc" style="left:722.45px;top:504px;width:200px;text-align:right;font-weight:bold;color:#222;letter-spacing:0.45px">17.306.904.964</div>
<div class="a rc" style="left:922.45px;top:504px;width:200px;text-align:right;font-weight:bold;color:#222;letter-spacing:0.45px">5.299.684.938</div>
<div class="a rc" style="left:1082.45px;top:504px;width:200px;text-align:right;font-weight:bold;color:#222;letter-spacing:0.45px">12.007.220.026</div>
<div class="a" style="left:32px;top:0;width:1px;height:539px;background:rgba(0,0,0,0.06)"></div>
<div class="a" style="left:82px;top:0;width:1px;height:539px;background:rgba(0,0,0,0.06)"></div>
<div class="a" style="left:252px;top:0;width:1px;height:539px;background:rgba(0,0,0,0.06)"></div>
<div class="a" style="left:452px;top:0;width:1px;height:539px;background:rgba(0,0,0,0.06)"></div>
<div class="a" style="left:652px;top:0;width:1px;height:539px;background:rgba(0,0,0,0.06)"></div>
<div class="a" style="left:772px;top:0;width:1px;height:539px;background:rgba(0,0,0,0.06)"></div>
<div class="a" style="left:932px;top:0;width:1px;height:539px;background:rgba(0,0,0,0.06)"></div>
<div class="a" style="left:1132px;top:0;width:1px;height:539px;background:rgba(0,0,0,0.06)"></div>
<div class="a" style="left:1292px;top:0;width:1px;height:539px;background:rgba(0,0,0,0.06)"></div>
<div class="a" style="left:1442px;top:0;width:1px;height:539px;background:rgba(0,0,0,0.06)"></div>
<div class="a hc" style="left:32px;top:0;width:50px;text-align:center">STT</div>
<div class="a hc" style="left:93px;top:0">Mã tài sản</div>
<div class="a hc" style="left:263px;top:0">Tên tài sản</div>
<div class="a hc" style="left:463px;top:0">Loại tài sản</div>
<div class="a hc" style="left:562px;top:0;width:200px;text-align:right">Số lượng</div>
<div class="a hc" style="left:722px;top:0;width:200px;text-align:right">Nguyên giá</div>
<div class="a hc" style="left:922px;top:0;width:200px;text-align:right">Hao mòn lũy kế</div>
<div class="a hc" style="left:1082px;top:0;width:200px;text-align:right">Giá trị còn lại</div>
<div class="a hc" style="left:1292px;top:0;width:150px;text-align:center">Ngày ghi tăng</div>
<div class="a" style="left:9px;top:11px;width:15px;height:15px;background:#4463f0;border-radius:3px"></div>
<svg class="a" style="left:9px;top:11px" width="15" height="15" viewBox="0 0 15 15"><path d="M3.5 7.6 L6.2 10.2 L11.5 4.8" fill="none" stroke="#fff" stroke-width="1.8"/></svg>
<div class="a" style="left:86px;top:39px;width:162px;height:28px;background:#fff;border:1px solid #d8d8d8;border-radius:2px"></div><div class="a" style="left:223px;top:40px;width:1px;height:26px;background:#d8d8d8"></div><svg class="a" style="left:229px;top:45px" width="16" height="16" viewBox="0 0 16 16"><path d="M1.5 2 H14.5 L9.5 8 V13.5 L6.5 12 V8 Z" fill="none" stroke="#444" stroke-width="1.1" stroke-linejoin="round"/></svg>
<div class="a" style="left:256px;top:39px;width:193px;height:28px;background:#fff;border:1px solid #d8d8d8;border-radius:2px"></div><div class="a" style="left:424px;top:40px;width:1px;height:26px;background:#d8d8d8"></div><svg class="a" style="left:430px;top:45px" width="16" height="16" viewBox="0 0 16 16"><path d="M1.5 2 H14.5 L9.5 8 V13.5 L6.5 12 V8 Z" fill="none" stroke="#444" stroke-width="1.1" stroke-linejoin="round"/></svg>
<div class="a" style="left:456px;top:39px;width:193px;height:28px;background:#fff;border:1px solid #d8d8d8;border-radius:2px"></div>
<svg class="a" style="left:607px;top:49px" width="10" height="6" viewBox="0 0 10 6"><path d="M0.5 0.5 H9.5 L5 5.5 Z" fill="#222"/></svg>
<svg class="a" style="left:627px;top:45px" width="16" height="16" viewBox="0 0 16 16"><path d="M1.5 2 H14.5 L9.5 8 V13.5 L6.5 12 V8 Z" fill="none" stroke="#444" stroke-width="1.1" stroke-linejoin="round"/></svg>
<div class="a" style="left:656px;top:39px;width:113px;height:28px;background:#fff;border:1px solid #d8d8d8;border-radius:2px"></div><div class="a" style="left:686px;top:40px;width:1px;height:26px;background:#d8d8d8"></div><div class="a" style="left:669px;top:51px;width:6px;height:1px;background:#666;box-shadow:0 3px 0 #666"></div>
<div class="a" style="left:776px;top:39px;width:153px;height:28px;background:#fff;border:1px solid #d8d8d8;border-radius:2px"></div><div class="a" style="left:806px;top:40px;width:1px;height:26px;background:#d8d8d8"></div><div class="a" style="left:789px;top:51px;width:6px;height:1px;background:#666;box-shadow:0 3px 0 #666"></div>
<div class="a" style="left:936px;top:39px;width:193px;height:28px;background:#fff;border:1px solid #d8d8d8;border-radius:2px"></div><div class="a" style="left:966px;top:40px;width:1px;height:26px;background:#d8d8d8"></div><div class="a" style="left:949px;top:51px;width:6px;height:1px;background:#666;box-shadow:0 3px 0 #666"></div>
<div class="a" style="left:1136px;top:39px;width:153px;height:28px;background:#fff;border:1px solid #d8d8d8;border-radius:2px"></div><div class="a" style="left:1166px;top:40px;width:1px;height:26px;background:#d8d8d8"></div><div class="a" style="left:1149px;top:51px;width:6px;height:1px;background:#666;box-shadow:0 3px 0 #666"></div>
<div class="a" style="left:1296px;top:39px;width:175px;height:28px;background:#fff;border:1px solid #d8d8d8;border-radius:2px"></div>
<svg class="a" style="left:1388px;top:44px" width="19" height="18" viewBox="0 0 19 18"><rect x="1.5" y="3" width="16" height="13.5" rx="3" fill="none" stroke="#666" stroke-width="1.1"/><path d="M5.5 1 V4.5 M13.5 1 V4.5" stroke="#666" stroke-width="1.1"/><g fill="#666"><rect x="5" y="8" width="1.4" height="1.4"/><rect x="8.8" y="8" width="1.4" height="1.4"/><rect x="12.6" y="8" width="1.4" height="1.4"/><rect x="5" y="11.5" width="1.4" height="1.4"/><rect x="8.8" y="11.5" width="1.4" height="1.4"/><rect x="12.6" y="11.5" width="1.4" height="1.4"/></g></svg>
<svg class="a" style="left:1416px;top:45px" width="16" height="16" viewBox="0 0 16 16"><path d="M1.5 2 H14.5 L9.5 8 V13.5 L6.5 12 V8 Z" fill="none" stroke="#444" stroke-width="1.1" stroke-linejoin="round"/></svg>
<div class="a" style="left:0;top:71px;width:2px;height:35px;background:#3f5de8"></div>
<div class="a" style="left:0;top:539px;width:1442px;height:7px;background:#f1f1f1"></div>
<div class="a" style="left:0;top:539px;width:1215px;height:7px;background:#cfcfcf"></div>
</div>
<div class="a" style="left:289px;top:669px;width:1431px;height:37px;background:linear-gradient(#fdfdfe,#f8f9fb)"></div>
<div class="a nw" style="left:299px;top:681px;font-size:12.6px;line-height:16px;color:#262626">Tổng số: <b>91</b> bản ghi</div>
<div class="a nw" style="left:1513px;top:681px;width:200px;text-align:right;font-size:12.6px;line-height:16px;color:#262626">Số dòng/trang</div>
<div class="a" style="left:289px;top:706px;width:1431px;height:1px;background:#a9a9a9"></div>
<div class="a" style="left:289px;top:708px;width:1431px;height:2px;background:#d6d6d6"></div>
<div class="a nw" style="left:305px;top:717px;font-size:12.6px;line-height:16px;color:#4a5bef">Lịch sử biến động</div>
<div class="a" style="left:305px;top:740px;width:104px;height:2px;background:#3f5de8"></div>
<div class="a nw" style="left:441px;top:717px;font-size:12.6px;line-height:16px;color:#262626">Thông tin kê khai</div>
<div class="a nw" style="left:571px;top:717px;font-size:12.6px;line-height:16px;color:#262626">Tệp đính kèm</div>
<div class="a" style="left:289px;top:743px;width:1431px;height:124px;overflow:hidden;background:#fff">
<div class="a" style="left:0;top:0;width:1431px;height:36px;background:#f3f3f3;border-bottom:1px solid #e2e2e2"></div>
<div class="a" style="left:0;top:71px;width:1431px;height:1px;background:#e6e6e6"></div>
<div class="a" style="left:0;top:106px;width:1431px;height:1px;background:#e6e6e6"></div>
<div class="a" style="left:59px;top:0;width:1px;height:116px;background:#e4e4e4"></div>
<div class="a" style="left:179px;top:0;width:1px;height:116px;background:#e4e4e4"></div>
<div class="a" style="left:329px;top:0;width:1px;height:116px;background:#e4e4e4"></div>
<div class="a" style="left:479px;top:0;width:1px;height:116px;background:#e4e4e4"></div>
<div class="a" style="left:773px;top:0;width:1px;height:116px;background:#e4e4e4"></div>
<div class="a" style="left:923px;top:0;width:1px;height:116px;background:#e4e4e4"></div>
<div class="a" style="left:1073px;top:0;width:1px;height:116px;background:#e4e4e4"></div>
<div class="a" style="left:1223px;top:0;width:1px;height:116px;background:#e4e4e4"></div>
<div class="a" style="left:1373px;top:0;width:1px;height:116px;background:#e4e4e4"></div>
<div class="a hc" style="left:0px;top:0px;width:59px;text-align:center;">STT</div>
<div class="a hc" style="left:70px;top:0px;">Số chứng từ</div>
<div class="a hc" style="left:179px;top:0px;width:150px;text-align:center;">Ngày chứng từ</div>
<div class="a hc" style="left:329px;top:0px;width:150px;text-align:center;">Ngày biến động</div>
<div class="a hc" style="left:490px;top:0px;">Nội dung</div>
<div class="a hc" style="left:713px;top:0px;width:200px;text-align:right;">Nguyên giá</div>
<div class="a hc" style="left:863px;top:0px;width:200px;text-align:right;">Số tiền thực hiện</div>
<div class="a hc" style="left:1013px;top:0px;width:200px;text-align:right;">Giá trị HM/KH</div>
<div class="a hc" style="left:1163px;top:0px;width:200px;text-align:right;">Hao mòn lũy kế</div>
<div class="a rc" style="left:0px;top:35px;width:59px;text-align:center;height:36px;line-height:38px">1</div>
<div class="a rc" style="left:70px;top:35px;height:36px;line-height:38px;color:#3a5ae8;letter-spacing:0.4px">HM000010</div>
<div class="a rc" style="left:179px;top:35px;width:150px;text-align:center;height:36px;line-height:38px;letter-spacing:0.75px">31/12/2023</div>
<div class="a rc" style="left:329px;top:35px;width:150px;text-align:center;height:36px;line-height:38px;letter-spacing:0.75px">31/12/2023</div>
<div class="a rc" style="left:490px;top:35px;height:36px;line-height:38px">Hao mòn</div>
<div class="a rc" style="left:713.4000000000001px;top:35px;width:200px;text-align:right;height:36px;line-height:38px;letter-spacing:0.35px">1.046.647.000</div>
<div class="a rc" style="left:863.4000000000001px;top:35px;width:200px;text-align:right;height:36px;line-height:38px;letter-spacing:0.35px">69.811.355</div>
<div class="a rc" style="left:1013.4000000000001px;top:35px;width:200px;text-align:right;height:36px;line-height:38px;letter-spacing:0.35px">69.811.355</div>
<div class="a rc" style="left:1163.4px;top:35px;width:200px;text-align:right;height:36px;line-height:38px;letter-spacing:0.35px">69.811.355</div>
<div class="a rc" style="left:0px;top:71px;width:59px;text-align:center;height:36px;line-height:38px">2</div>
<div class="a rc" style="left:70px;top:71px;height:36px;line-height:38px;color:#3a5ae8;letter-spacing:0.4px">GT000012</div>
<div class="a rc" style="left:179px;top:71px;width:150px;text-align:center;height:36px;line-height:38px;letter-spacing:0.75px">31/10/2023</div>
<div class="a rc" style="left:329px;top:71px;width:150px;text-align:center;height:36px;line-height:38px;letter-spacing:0.75px">31/10/2023</div>
<div class="a rc" style="left:490px;top:71px;height:36px;line-height:38px">Ghi tăng</div>
<div class="a rc" style="left:713.4000000000001px;top:71px;width:200px;text-align:right;height:36px;line-height:38px;letter-spacing:0.35px">1.046.647.000</div>
<div class="a rc" style="left:863.4000000000001px;top:71px;width:200px;text-align:right;height:36px;line-height:38px;letter-spacing:0.35px">0</div>
<div class="a rc" style="left:1013.4000000000001px;top:71px;width:200px;text-align:right;height:36px;line-height:38px;letter-spacing:0.35px">0</div>
<div class="a rc" style="left:1163.4px;top:71px;width:200px;text-align:right;height:36px;line-height:38px;letter-spacing:0.35px">0</div>
<div class="a" style="left:0;top:116px;width:1431px;height:7px;background:#d2d2d2"></div>
</div>
<div class="a" style="left:1712px;top:708px;width:8px;height:159px;background:linear-gradient(90deg,rgba(0,0,0,0),rgba(0,0,0,0.13))"></div>
<div class="a" style="left:1708px;top:317px;width:14px;height:90px;background:#4463f0;border-radius:8px 0 0 8px;box-shadow:-1px 1px 3px rgba(0,0,0,.25)"></div>
<svg class="a" style="left:1712px;top:356px" width="8" height="12" viewBox="0 0 8 12"><path d="M6 2 L2.5 6 L6 10" fill="none" stroke="#fff" stroke-width="1.5"/></svg>
</div></div>
</body></html>
